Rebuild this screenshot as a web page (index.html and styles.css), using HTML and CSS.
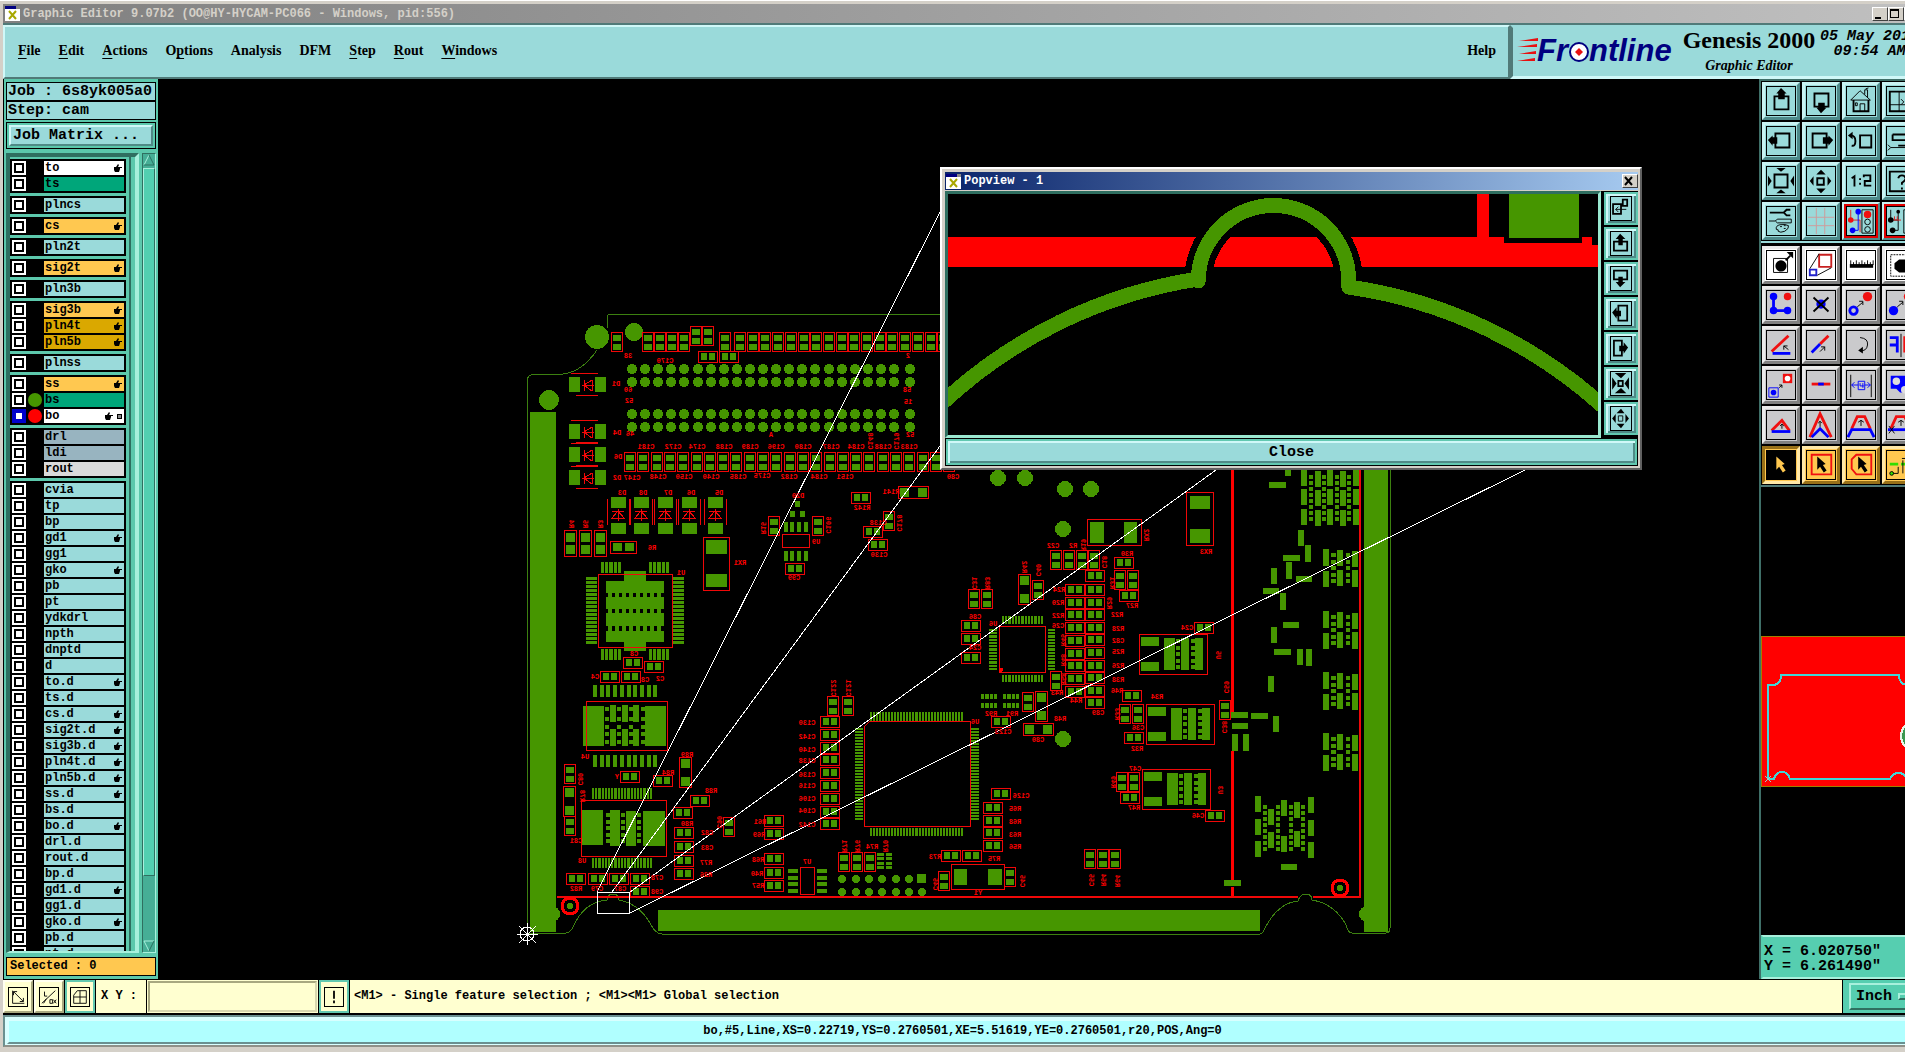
FILE: index.html
```html
<!DOCTYPE html>
<html lang="en">
<head>
    <meta charset="UTF-8">
    <title>Graphic Editor 9.07b2</title>
    <meta name="viewport" content="width=device-width, initial-scale=1">
    <link rel="stylesheet" href="styles.css">
</head>
<body>
<div class="window">
    <div class="titlebar">
        <svg class="xicon" viewBox="0 0 15 15"><rect width="15" height="15" fill="#fff"/><rect width="11" height="3" fill="#000080"/><rect x="11" width="4" height="3" fill="#888"/><path d="M4 5l7 8M11 5l-7 8" stroke="#a8a800" stroke-width="2"/></svg>
        <span class="title-text">Graphic Editor 9.07b2 (OO@HY-HYCAM-PC066 - Windows, pid:556)</span>
        <button class="winbtn" aria-label="Minimize"><svg viewBox="0 0 12 12"><path d="M2 9h6v2H2z"/></svg></button>
        <button class="winbtn" aria-label="Maximize"><svg viewBox="0 0 12 12"><path d="M1 1h9v9H1zM2 3v6h7V3z" fill-rule="evenodd"/></svg></button>
        <button class="winbtn" aria-label="Close window"><svg viewBox="0 0 12 12"><path d="M2 2l7 7M9 2l-7 7" stroke="#000" stroke-width="2"/></svg></button>
    </div>

    <header>
        <nav>
            <a href="#"><u>F</u>ile</a>
            <a href="#"><u>E</u>dit</a>
            <a href="#"><u>A</u>ctions</a>
            <a href="#">O<u>p</u>tions</a>
            <a href="#">Analysis</a>
            <a href="#">DFM</a>
            <a href="#"><u>S</u>tep</a>
            <a href="#"><u>R</u>out</a>
            <a href="#"><u>W</u>indows</a>
            <a href="#" class="help">Help</a>
        </nav>
        <div class="brand">
            <svg class="logo" viewBox="0 0 162 32">
                <path d="M3 6l19-3v3H3zM1 12l20-3v3H1zM3 19l17-3v3H3zM1 26l18-3v3H1z" fill="#e81010"/>
                <text x="21" y="26" class="logo-text">Fr</text>
                <circle cx="63" cy="17" r="9" fill="#fff" stroke="#000080" stroke-width="2"/>
                <path d="M63 13l4 4-4 4-4-4z" fill="#e81010"/>
                <text x="73" y="26" class="logo-text">ntline</text>
            </svg>
            <div class="product">
                <div class="product-name">Genesis 2000</div>
                <div class="product-sub">Graphic Editor</div>
            </div>
            <div class="clock">05 May 2015<br>09:54 AM</div>
        </div>
    </header>

    <main>
        <aside class="side">
            <div class="info">Job : 6s8yk005a0</div>
            <div class="info">Step: cam</div>
            <div class="matrix"><button>Job Matrix ...</button></div>
            <div class="list-area">
                <div class="list-frame"><div id="layers"></div></div>
                <div class="scroll">
                    <svg viewBox="0 0 12 12"><path d="M6 1l5 10H1z" fill="#46ae96"/><path d="M1 11L6 1" stroke="#a8f0dc" fill="none"/><path d="M6 1l5 10H1" stroke="#2a7060" fill="none"/></svg>
                    <div class="thumb"></div>
                    <svg viewBox="0 0 12 12"><path d="M1 1h10L6 11z" fill="#46ae96"/><path d="M6 11L1 1h10" stroke="#a8f0dc" fill="none"/><path d="M11 1L6 11" stroke="#2a7060" fill="none"/></svg>
                </div>
            </div>
            <div class="selected">Selected : 0</div>
        </aside>

        <section class="canvas">
            <svg id="board" width="1602" height="900" viewBox="158 79 1602 900"></svg>
            <div class="popview">
                <div class="pop-title">
                    <svg class="xicon" viewBox="0 0 15 15"><rect width="15" height="15" fill="#fff"/><rect width="11" height="3" fill="#000080"/><rect x="11" width="4" height="3" fill="#888"/><path d="M4 5l7 8M11 5l-7 8" stroke="#a8a800" stroke-width="2"/></svg>
                    <span class="title-text">Popview - 1</span>
                    <button class="winbtn" aria-label="Close popview"><svg viewBox="0 0 12 12"><path d="M2 2l7 8M9 2l-7 8" stroke="#000" stroke-width="2"/></svg></button>
                </div>
                <div class="pop-body">
                    <div class="pop-view">
                        <svg viewBox="948 194 652 241" preserveAspectRatio="none" shape-rendering="crispEdges">
                            <g fill="#f00">
                                <rect x="948" y="237" width="652" height="30"/>
                                <rect x="1479" y="194" width="12" height="44"/>
                            </g>
                            <path d="M1506 237h78v6h-78zM1594 237h6v8h-6z" fill="#000"/>
                            <rect x="1511" y="194" width="70" height="44" fill="#469600"/>
                            <path d="M1199 281a75 75 0 0 1 151 0" fill="none" stroke="#000" stroke-width="28"/>
                            <path d="M940 405A485 485 0 0 1 1199 279V281A75 75 0 0 1 1350 281V287A485 485 0 0 1 1608 409" fill="none" stroke="#469600" stroke-width="15" stroke-linejoin="round"/>
                        </svg>
                    </div>
                    <div class="pop-tools">
                        <button aria-label="Copy view"><svg viewBox="0 0 22 26"><path d="M2 8h9v11H2zM13 3h5v7h-5z" fill="none" stroke="#000" stroke-width="2"/><path d="M5 14h12M8 11l-3 3 3 3" fill="none" stroke="#000"/></svg></button>
                        <button aria-label="Pan up"><svg viewBox="0 0 22 26"><path d="M3 11h15v10H3z" fill="none" stroke="#000" stroke-width="2"/><path d="M10 2l6 6h-3v7H8V8H5z"/></svg></button>
                        <button aria-label="Pan down"><svg viewBox="0 0 22 26"><path d="M3 4h15v10H3z" fill="none" stroke="#000" stroke-width="2"/><path d="M10 23l6-6h-3v-6H8v6H5z"/></svg></button>
                        <button aria-label="Pan left"><svg viewBox="0 0 22 26"><path d="M8 4h10v17H8z" fill="none" stroke="#000" stroke-width="2"/><path d="M1 12l5-6v4h5v6H6v3z"/></svg></button>
                        <button aria-label="Pan right"><svg viewBox="0 0 22 26"><path d="M3 4h9v17H3z" fill="none" stroke="#000" stroke-width="2"/><path d="M19 12l-5-6v4H9v6h5v3z"/></svg></button>
                        <button aria-label="Zoom in"><svg viewBox="0 0 22 26"><path d="M8 10h5v6H8z" fill="none" stroke="#000" stroke-width="2"/><path d="M4 1h13l-6 6zM4 24h13l-6-6zM1 6v14l5-7zM20 6v14l-5-7z"/></svg></button>
                        <button aria-label="Zoom out"><svg viewBox="0 0 22 26"><path d="M8 10h5v6H8z" fill="none" stroke="#000"/><path d="M6 7h9l-4-5zM6 19h9l-4 5zM5 8v10l-4-5zM16 8v10l4-5z"/></svg></button>
                    </div>
                </div>
                <div class="pop-foot"><button>Close</button></div>
            </div>
        </section>

        <aside class="tools">
            <div class="toolgrid">
                <button aria-label="Pan up"><svg viewBox="0 0 30 30"><path d="M8 10h15v14H8z" class="k2"/><path d="M15 1l6 6h-2v6h-7V7h-2z"/></svg></button>
                <button aria-label="Pan down"><svg viewBox="0 0 30 30"><path d="M8 7h15v14H8z" class="k2"/><path d="M15 28l6-6h-2v-5h-7v5h-2z"/></svg></button>
                <button aria-label="Home"><svg viewBox="0 0 30 30"><path d="M4 14L14 4l11 10zM14 26v-8h5v8M9 17h2v3H9zM19 8V3h3v8M20 2l3-1" class="k1"/><path d="M7 14v12h16V14" class="k2"/></svg></button>
                <button aria-label="Window"><svg viewBox="0 0 30 30"><path d="M3 5h24v21H3z" class="k2"/><path d="M13 5v21M3 19h24M15 13l3 3-3 3" class="k1"/></svg></button>

                <button aria-label="Pan left"><svg viewBox="0 0 30 30"><path d="M9 7h15v15H9z" class="k2"/><path d="M1 14l5-5v2h5v7H6v2z"/></svg></button>
                <button aria-label="Pan right"><svg viewBox="0 0 30 30"><path d="M6 7h15v15H6z" class="k2"/><path d="M28 14l-5-5v2h-6v7h6v2z"/></svg></button>
                <button aria-label="Previous view"><svg viewBox="0 0 30 30"><path d="M14 9h12v13H14z" class="k2"/><path d="M4 9q5 0 5 6t-4 5" class="k2"/><path d="M1 9l5-4v8z"/></svg></button>
                <button aria-label="Zoom panel"><svg viewBox="0 0 30 30"><path d="M6 8h24M6 8v6h24M12 20h16" class="k2"/><path d="M1 19l3 3-3 3M4 22h24" class="k1"/></svg></button>

                <button aria-label="Zoom in"><svg viewBox="0 0 30 30"><path d="M8 8h14v14H8z" class="k2"/><path d="M10 1h10l-5 4zM10 28h10l-5-4zM1 9v12l4-6zM29 9v12l-4-6z"/></svg></button>
                <button aria-label="Zoom out"><svg viewBox="0 0 30 30"><path d="M11 12h7v7h-7z" class="k2"/><path d="M10 8h10l-5-5zM10 23h10l-5 5zM7 10v10l-4-5zM22 10v10l4-5z"/></svg></button>
                <button aria-label="Scale 1:2"><svg viewBox="0 0 30 30"><path d="M5 12l3-2v11M14 12v2M14 17v2M18 11V9h7v6h-6v5h7" class="k2"/></svg></button>
                <button aria-label="Help"><svg viewBox="0 0 30 30"><path d="M3 5h24v21H3z" class="k2"/><path d="M12 12q1-3 4-3t4 3q0 2-4 5v2M16 22v2" class="k2"/></svg></button>

                <button aria-label="Preferences"><svg viewBox="0 0 30 30"><path d="M3 6h16M25 3h-4l-3 3 3 3h4" class="k2"/><path d="M2 15h7l2-2h15v4H11l-2-2" class="k1"/><path d="M10 24q-1-4 4-5 6-1 9 1 1 3-4 6-5 2-7 0 1-2-2-2zM14 21h2M18 20h2M18 23h2" class="k1"/></svg></button>
                <button aria-label="Grid"><svg viewBox="0 0 30 30"><path d="M10 1v28M19 1v28M1 11h28M1 20h28" fill="none" stroke="#d09a9a"/></svg></button>
                <button class="hot" aria-label="Net stop"><svg viewBox="0 0 30 30"><path d="M4 3v11h10v13" class="r1"/><path d="M12 5v20H6" class="b1"/><circle cx="4" cy="14" r="3" class="rf"/><circle cx="12" cy="5" r="3" class="bf"/><circle cx="6" cy="25" r="3" class="bf"/><path d="M16 3h12v25H16z" class="k1"/><circle cx="22" cy="8" r="4" class="rf"/><circle cx="22" cy="16" r="3" class="k1"/><circle cx="22" cy="24" r="3" class="k1"/></svg></button>
                <button class="hot" aria-label="Net compare"><svg viewBox="0 0 30 30"><path d="M12 5v20H6M4 3v11h8" class="k1"/><path d="M7 14h8M8 10v4M11 10v4" class="r1"/><circle cx="12" cy="5" r="2"/><circle cx="4" cy="14" r="3"/><circle cx="6" cy="25" r="3"/><path d="M18 3h12v25H18z" class="k1"/></svg></button>
            </div>
            <div class="toolgrid gray">
                <button class="white" aria-label="Pad info"><svg viewBox="0 0 30 30"><path d="M7 8h15v15H7z" class="k1"/><circle cx="15" cy="16" r="6"/><path d="M20 10l5-5" class="k2"/><path d="M21 1h7v7z"/></svg></button>
                <button class="white" aria-label="Zoom feature"><svg viewBox="0 0 30 30"><path d="M13 4h13v13H13z" fill="none" stroke="#c82020" stroke-width="2"/><path d="M3 20h7v6H3z" fill="none" stroke="#22c" stroke-width="2"/><path d="M3 19L13 3M11 26l15-8" class="k1"/></svg></button>
                <button class="white" aria-label="Measure"><svg viewBox="0 0 30 30"><path d="M3 14h25v4H3z"/><path d="M4 10v5M7 12v3M10 10v5M13 12v3M16 10v5M19 12v3M22 10v5M25 12v3M28 10v5" class="k1"/></svg></button>
                <button class="white" aria-label="Highlight"><svg viewBox="0 0 30 30"><path d="M4 4h25v23H4z" class="k1" stroke-dasharray="2 1"/><path d="M13 9h17v14H13l-5-4v-6z"/></svg></button>

                <button aria-label="Copy chain"><svg viewBox="0 0 30 30"><path d="M7 6v15h15" fill="none" stroke="#00f" stroke-width="3"/><circle cx="7" cy="6" r="4" class="bf"/><circle cx="7" cy="21" r="4" class="bf"/><circle cx="22" cy="21" r="4" class="bf"/><circle cx="22" cy="6" r="4" class="rf"/></svg></button>
                <button aria-label="Delete"><svg viewBox="0 0 30 30"><circle cx="15" cy="14" r="5" class="bf"/><path d="M7 7l16 15M23 7L7 22" class="k2"/></svg></button>
                <button aria-label="Move"><svg viewBox="0 0 30 30"><circle cx="7" cy="21" r="4" class="b2"/><circle cx="22" cy="6" r="5" class="rf"/><path d="M11 17l6-5M13 11h4v4" class="k1"/></svg></button>
                <button aria-label="Copy"><svg viewBox="0 0 30 30"><circle cx="7" cy="21" r="5" class="bf"/><circle cx="23" cy="6" r="5" class="rf"/><path d="M11 17l6-5M13 11h4v4" class="k1"/></svg></button>

                <button aria-label="Rotate line"><svg viewBox="0 0 30 30"><path d="M5 22L23 5" class="r2"/><path d="M6 24h19" class="b2"/><path d="M23 20l-5-4M18 20v-4h4" class="k1"/></svg></button>
                <button aria-label="Stretch line"><svg viewBox="0 0 30 30"><path d="M14 14l9-9" class="r2"/><path d="M5 23l9-9" class="b2"/><path d="M14 22l5-5M15 17h4v4" class="k1"/></svg></button>
                <button aria-label="Rotate"><svg viewBox="0 0 30 30"><path d="M14 7q9 1 8 8-1 7-8 6" class="k1"/><path d="M12 21l5-4v7z"/></svg></button>
                <button aria-label="Mirror"><svg viewBox="0 0 30 30"><path d="M3 7h8v16M3 15h8" class="b2"/><path d="M15 3v25" class="k1"/><path d="M27 7h-8v16" class="r2"/></svg></button>

                <button aria-label="Transform"><svg viewBox="0 0 30 30"><path d="M2 18h10v10H2z" class="b1"/><circle cx="7" cy="23" r="3" class="bf"/><path d="M17 3h10v10H17z" class="rf"/><circle cx="22" cy="8" r="3" fill="#fff"/><path d="M13 18l3-3M13 15h3v3" class="k1"/></svg></button>
                <button aria-label="Break line"><svg viewBox="0 0 30 30"><path d="M5 14h20" class="r2"/><path d="M12 14h6" class="b2"/></svg></button>
                <button aria-label="Spacing"><svg viewBox="0 0 30 30"><path d="M4 4v24M26 4v24" class="k1"/><path d="M12 11h7v9h-7zM12 15H5M8 12l-3 3 3 3M19 15h6M22 12l3 3-3 3M14 13v3h4M17 13v5" class="b1"/></svg></button>
                <button aria-label="Merge"><svg viewBox="0 0 30 30"><path d="M4 5h26v18H14l-4-4H4z" class="bf"/><circle cx="10" cy="11" r="4" fill="#ddd"/><circle cx="19" cy="20" r="4" fill="#ddd"/></svg></button>

                <button aria-label="Angle small"><svg viewBox="0 0 30 30"><path d="M5 21L16 10l8 11" class="r2"/><path d="M5 22h20" class="b2"/><path d="M16 19v-5M14 16l2-2 2 2" class="k1"/></svg></button>
                <button aria-label="Angle large"><svg viewBox="0 0 30 30"><path d="M3 28L14 3l12 25" class="r2"/><path d="M5 28l9-9 9 9" class="b2"/><path d="M14 17v-6M12 13l2-2 2 2" class="k1"/></svg></button>
                <button aria-label="Bridge"><svg viewBox="0 0 30 30"><path d="M5 19l6-13h8l6 13" class="r2"/><path d="M1 28l4-8h20l4 8" class="b2"/><path d="M15 16v-6M12 12l3-2 3 2" class="k1"/></svg></button>
                <button aria-label="Bridge delete"><svg viewBox="0 0 30 30"><path d="M4 19l6-13h9l6 13" class="r2"/><path d="M1 20h28" class="b2"/><path d="M15 16v-6M12 12l3-2 3 2M2 16l6 8M8 16l-6 8" class="k1"/></svg></button>

                <button class="orange down" aria-label="Select"><svg viewBox="0 0 30 30"><path d="M10 6l9 8-3 1 4 6-3 2-4-6-3 3z" fill="#ffc850"/></svg></button>
                <button class="orange" aria-label="Select box"><svg viewBox="0 0 30 30"><path d="M5 4h21v21H5z" fill="none" stroke="#f01010" stroke-width="2"/><path d="M11 6l9 8-3 1 4 6-3 2-4-6-3 3z"/></svg></button>
                <button class="orange" aria-label="Select polygon"><svg viewBox="0 0 30 30"><path d="M10 4h16v21H10l-5-6V9z" fill="none" stroke="#f01010" stroke-width="2"/><path d="M12 6l9 8-3 1 4 6-3 2-4-6-3 3z"/></svg></button>
                <button class="orange" aria-label="Select net"><svg viewBox="0 0 30 30"><path d="M3 14h9M15 14h12" stroke="#3d0" stroke-width="3"/><path d="M6 24h6V17M17 10v14M16 8h10" class="k1"/><circle cx="5" cy="24" r="2" fill="#3d0" stroke="#000"/></svg></button>
            </div>
            <div class="overview">
                <svg viewBox="1762 636 161 151" shape-rendering="crispEdges">
                    <rect x="1762" y="636" width="161" height="151" fill="#a08000"/>
                    <rect x="1763" y="637" width="160" height="149" fill="#f00"/>
                    <path d="M1769 779v-94h6q7-1 7-10h118q0 9 8 10h6v94h-6q-2-6-9-6-5 0-8 6h-100q-2-7-8-7t-8 7z" fill="none" stroke="#40d8d8" stroke-width="2"/>
                    <path d="M1766 776l6 6M1772 776l-6 6" stroke="#9cc"/>
                    <circle cx="1918" cy="736" r="17" fill="#e8f4e8"/>
                    <circle cx="1918" cy="736" r="15" fill="#3c9850"/>
                </svg>
            </div>
            <div class="coords">X = 6.020750"<br>Y = 6.261490"</div>
        </aside>
    </main>

    <div class="entrybar">
        <button class="entry-btn" aria-label="Snap"><svg viewBox="0 0 20 20"><path d="M4 3v14h13M5 4l11 11M5 8V4h4M16 11v4h-4" class="k1"/></svg></button>
        <button class="entry-btn" aria-label="Measure units"><svg viewBox="0 0 20 20"><path d="M2 17L17 3M5 4v5h3M7 12l-3 5M11 13h3v4h-3zM15 13l3 4M18 13l-3 4" class="k1"/></svg></button>
        <button class="entry-btn green" aria-label="Grid snap"><svg viewBox="0 0 20 20"><path d="M7 3h10v14H3V8zM10 3v14M3 10h14" class="k1"/></svg></button>
        <label for="xy">X Y :</label>
        <input type="text" id="xy">
        <button class="entry-btn green" aria-label="Alert"><svg viewBox="0 0 20 20"><path d="M10 3v9M10 14v3" class="k2"/></svg></button>
        <div class="message">&lt;M1&gt; - Single feature selection ; &lt;M1&gt;&lt;M1&gt; Global selection</div>
        <div class="units">
            <select aria-label="Units">
                <option>Inch</option>
                <option>mm</option>
            </select>
            <span class="knob"></span>
        </div>
    </div>
    <div class="status"><div>bo,#5,Line,XS=0.22719,YS=0.2760501,XE=5.51619,YE=0.2760501,r20,POS,Ang=0</div></div>
</div>
<script src="app.js"></script>
</body>
</html>
```

FILE: styles.css
```css
* { box-sizing: border-box; }
body {
    margin: 0;
    height: 100vh;
    overflow: hidden;
    background: #d4d0c8;
    color: #000;
    font-family: "Liberation Mono", monospace;
    font-size: 12px;
    font-weight: bold;
}
button, input, select { font: inherit; color: inherit; border-radius: 0; }
button { padding: 0; cursor: pointer; }
svg { display: block; }

/* the editor window runs a little past the right edge of the screen */
.window {
    width: calc(100% + 20px);
    height: 100vh;
    display: flex;
    flex-direction: column;
    padding: 3px 3px 5px 3px;
    background: #d4d0c8;
    border-top: 1px solid #fff;
}
.titlebar {
    display: flex;
    align-items: center;
    height: 19px;
    padding: 0 2px;
    background: linear-gradient(90deg, #808080, #c0c0c0);
    color: #d4d0c8;
}
.xicon { width: 15px; height: 15px; margin-right: 3px; }
.title-text { flex: 1; line-height: 18px; }
.winbtn {
    width: 16px;
    height: 14px;
    background: #d4d0c8;
    border: 1px solid;
    border-color: #fff #404040 #404040 #fff;
}
.winbtn svg { width: 12px; height: 12px; }

/* menu + brand */
header {
    display: flex;
    height: 56px;
    background: #9adada;
    border-top: 2px solid #507a78;
    font-family: "Liberation Serif", serif;
}
nav {
    flex: 1;
    display: flex;
    align-items: center;
    gap: 18px;
    padding: 0 12px 2px 13px;
    border: 2px solid;
    border-color: #d0f8f8 #507a78 #507a78 #d0f8f8;
    font-size: 14px;
}
nav a { color: #000; text-decoration: none; }
nav u { text-underline-offset: 3px; }
nav .help { margin-left: auto; }
.brand {
    width: 412px;
    display: flex;
    border: 3px solid;
    border-color: #9adada #d0f8f8 #d0f8f8 #507a78;
    padding-left: 3px;
}
.logo { width: 162px; height: 32px; margin-top: 7px; flex: none; overflow: visible; }
.logo-text {
    font: italic bold 31px "Liberation Sans", sans-serif;
    fill: #000080;
}
.product { width: 138px; margin-left: 2px; text-align: center; flex: none; }
.product-name { font-size: 24px; line-height: 28px; margin-top: -2px; }
.product-sub { font-size: 14px; font-style: italic; line-height: 24px; }
.clock {
    font: italic bold 15px/15px "Liberation Mono", monospace;
    text-align: center;
    white-space: nowrap;
    padding: 1px 2px;
}

main { flex: 1; display: flex; min-height: 0; background: #000; }

/* left column */
.side {
    width: 155px;
    display: flex;
    flex-direction: column;
    padding: 3px 2px;
    background: #5cc8ac;
    border-left: 1px solid #000;
}
.info {
    height: 19px;
    padding-left: 1px;
    border: 1px solid #000;
    background: #9adada;
    font-size: 15px;
    line-height: 17px;
    white-space: nowrap;
}
.matrix {
    margin: 2px 0 4px;
    height: 27px;
    padding: 2px;
    border: 1px solid #000;
}
.matrix button {
    width: 100%;
    height: 100%;
    border: 2px solid;
    border-color: #d0f8f8 #4f8a86 #4f8a86 #d0f8f8;
    background: #9adada;
    font-size: 15px;
    line-height: 18px;
    text-align: left;
    padding-left: 2px;
}
.list-area { flex: 1; display: flex; min-height: 0; gap: 3px; }
.list-frame {
    flex: 1;
    overflow: hidden;
    border: 4px solid;
    border-color: #2f6f60 #a8f0dc #a8f0dc #2f6f60;
    padding-right: 4px;
    border-bottom-width: 2px;
}
#layers {
    padding: 2px 3px 0 0;
    display: flex;
    flex-direction: column;
    gap: 3px;
    border-right: 2px solid #2f6f60;
}
.group {
    display: flex;
    flex-direction: column;
    gap: 2px;
    padding: 2px;
    background: #000;
}
.layer { display: flex; height: 14px; }
.layer input {
    appearance: none;
    width: 14px;
    height: 14px;
    margin: 0;
    background: #fff;
    border: 2px solid #fff;
    outline: 2px solid #000;
    outline-offset: -4px;
}
.layer input:checked { border-color: #00c; outline-color: #00c; outline-offset: -4px; }
.dot { width: 14px; height: 14px; margin: 0 2px; border-radius: 50%; }
.dot.green { background: #469600; }
.dot.red { background: #f00; }
.lname {
    flex: 1;
    display: flex;
    align-items: center;
    padding: 0 2px 0 1px;
    line-height: 13px;
    background: #9adada;
}
.lname.white { background: #fff; }
.lname.mask { background: #00a67a; }
.lname.signal { background: #ffc850; }
.lname.power { background: #daa800; }
.lname.drill { background: #98b4c0; }
.lname.rout { background: #dadada; }
.hand { width: 8px; height: 8px; margin-left: auto; }
.mark { width: 5px; height: 5px; margin-left: 4px; border: 1px solid #000; background: #888; }
.scroll {
    width: 14px;
    display: flex;
    flex-direction: column;
    background: #46ae96;
    border: 1px solid;
    border-color: #2f6f60 #a8f0dc #a8f0dc #2f6f60;
}
.scroll svg { width: 12px; height: 12px; }
.thumb {
    flex: 1;
    margin: 2px 0 64px;
    background: #52cfb0;
    border: 1px solid;
    border-color: #a8f0dc #2f6f60 #2f6f60 #a8f0dc;
}
.selected {
    margin-top: 4px;
    height: 19px;
    padding-left: 3px;
    border: 1px solid #000;
    background: #ffc850;
    line-height: 17px;
}

/* drawing area */
.canvas { flex: 1; position: relative; overflow: hidden; }
.label { font: bold 7px "Liberation Mono", monospace; fill: #f00; text-anchor: middle; }

.popview {
    position: absolute;
    left: 782px;
    top: 88px;
    width: 702px;
    display: flex;
    flex-direction: column;
    padding: 3px 2px 2px 3px;
    background: #d4d0c8;
    border: 2px solid;
    border-color: #fff #606060 #606060 #fff;
}
.pop-title {
    display: flex;
    align-items: center;
    height: 18px;
    padding-left: 1px;
    background: linear-gradient(90deg, #0a246a, #a6caf0);
    color: #fff;
}
.pop-body { display: flex; height: 247px; margin-top: 1px; background: #000; }
.pop-view {
    flex: 1;
    border: 3px solid;
    border-color: #2f6f60 #9ae8d0 #9ae8d0 #2f6f60;
}
.pop-view svg { width: 100%; height: 100%; }
.pop-tools { display: flex; flex-direction: column; gap: 2px; padding: 1px 0 0 3px; }
.pop-tools button {
    width: 34px;
    height: 33px;
    padding: 0 3px;
    border: 2px solid #62c8b0;
    background: #9adada;
    box-shadow: inset 2px 2px #d0f8f8, inset -2px -2px #4f8a86;
}
.pop-tools svg { width: 22px; height: 25px; margin: 0 auto; border: 1px solid #000; }
.pop-foot { padding: 1px; background: #000; }
.pop-foot button {
    width: 100%;
    height: 26px;
    border: 2px solid #62c8b0;
    background: #9adada;
    box-shadow: inset 2px 2px #d0f8f8, inset -2px -2px #4f8a86;
    font-size: 15px;
}

/* right column */
.tools {
    width: 163px;
    display: flex;
    flex-direction: column;
    border-left: 2px solid #3f6f68;
    border-top: 2px solid #3f6f68;
}
.toolgrid {
    display: grid;
    grid-template-columns: repeat(4, 38px);
    gap: 2px;
    padding: 1px;
    border-bottom: 2px solid #9adada;
}
.toolgrid.gray { padding-top: 3px; border-bottom-color: #507a78; }
.toolgrid button {
    width: 38px;
    height: 38px;
    padding: 1px;
    background: #9adada;
    border: 3px solid;
    border-color: #c8f2f2 #4f8a8a #4f8a8a #c8f2f2;
}
.toolgrid svg { width: 30px; height: 30px; border: 1px solid #000; }
.gray button { background: #cacacc; border-color: #eaeaea #808080 #808080 #eaeaea; }
.gray .white svg { background: #fff; }
.gray .white { background: #fff; }
.gray .orange { background: #ffc850; border-color: #ffe8a8 #987018 #987018 #ffe8a8; }
.gray .orange.down { border-color: #987018 #ffe8a8 #ffe8a8 #987018; }
.orange.down svg { background: #000; }
.toolgrid .hot svg { outline: 2px solid #e00000; }
.k1 { fill: none; stroke: #000; stroke-width: 1; }
.k2 { fill: none; stroke: #000; stroke-width: 2; }
.r1 { fill: none; stroke: #e02020; stroke-width: 1; }
.r2 { fill: none; stroke: #f01010; stroke-width: 3; }
.b1 { fill: none; stroke: #00f; stroke-width: 1; }
.b2 { fill: none; stroke: #00f; stroke-width: 3; }
.rf { fill: #f01010; }
.bf { fill: #00f; }
.overview { flex: 1; display: flex; align-items: center; }
.overview svg { width: 161px; height: 151px; }
.coords {
    height: 44px;
    padding: 7px 1px;
    background: #56ceb0;
    border: 2px solid;
    border-color: #a8f0dc #2f6f60 #a8f0dc #56ceb0;
    font-size: 15px;
    line-height: 15px;
}

/* entry line */
.entrybar {
    display: flex;
    height: 36px;
    padding: 1px 0 2px;
    gap: 1px;
    background: #000;
}
.entry-btn {
    width: 30px;
    padding: 3px;
    background: #ffffd0;
    border: 2px solid;
    border-color: #fffff0 #a8a880 #a8a880 #fffff0;
}
.entry-btn svg { width: 20px; height: 20px; margin: 0 auto; border: 1px solid #000; background: #ffffd0; }
.entry-btn.green { border-color: #62c8b0; }
.entrybar label { width: 50px; background: #ffffd0; line-height: 32px; padding-left: 5px; }
.entrybar input {
    width: 171px;
    border: 3px solid;
    border-color: #a8a880 #d8d8b0 #d8d8b0 #a8a880;
    outline: 1px solid #ffffd0;
    outline-offset: -1px;
    background: #ffffd0;
}
.message { flex: 1; background: #ffffd0; line-height: 33px; padding-left: 4px; white-space: nowrap; }
.units {
    width: 79px;
    display: flex;
    align-items: center;
    position: relative;
    padding: 3px 6px;
    background: #56ceb0;
}
.units select {
    appearance: none;
    width: 100%;
    height: 27px;
    padding: 0 5px;
    border: 2px solid;
    border-color: #a8f0dc #2f6f60 #2f6f60 #a8f0dc;
    background: #56ceb0;
    font-size: 15px;
}
.knob {
    position: absolute;
    right: 12px;
    top: 13px;
    width: 12px;
    height: 7px;
    border: 2px solid;
    border-color: #a8f0dc #2f6f60 #2f6f60 #a8f0dc;
}

.status {
    height: 32px;
    padding: 2px;
    background: #d8ffff;
    border: 2px solid #6a9090;
    border-bottom-color: #909088;
}
.status div {
    height: 25px;
    background: #b0ffff;
    border: 2px solid;
    border-color: #d8ffff #6a9090 #6a9090 #d8ffff;
    text-align: center;
    line-height: 20px;
}
```

FILE: app.js
```js
// ---- layer list ----
// name, class, hand marker
const groups = [
    [['to', 'white', 1], ['ts', 'mask']],
    [['plncs', '']],
    [['cs', 'signal', 1]],
    [['pln2t', '']],
    [['sig2t', 'signal', 1]],
    [['pln3b', '']],
    [['sig3b', 'signal', 1], ['pln4t', 'power', 1], ['pln5b', 'power', 1]],
    [['plnss', '']],
    [['ss', 'signal', 1], ['bs', 'mask', 0, 'green'], ['bo', 'white', 1, 'red']],
    [['drl', 'drill'], ['ldi', 'drill'], ['rout', 'rout']],
    ['cvia', 'tp', 'bp', 'gd1*', 'gg1', 'gko*', 'pb', 'pt', 'ydkdrl', 'npth', 'dnptd', 'd',
     'to.d*', 'ts.d', 'cs.d*', 'sig2t.d*', 'sig3b.d*', 'pln4t.d*', 'pln5b.d*', 'ss.d*', 'bs.d',
     'bo.d*', 'drl.d', 'rout.d', 'bp.d', 'gd1.d*', 'gg1.d', 'gko.d*', 'pb.d', 'pt.d']
        .map(n => [n.replace('*', ''), '', n.endsWith('*')])
];
const hand = '<svg class="hand" viewBox="0 0 8 8"><path d="M0 3h2l2-3 1 1-1 2h4v1H6v1L5 8H1L0 6z"/></svg>';

document.getElementById('layers').innerHTML = groups.map(g =>
    '<div class="group">' + g.map(([name, cls, h, dot]) => `<label class="layer">
        <input type="checkbox"${name === 'bo' ? ' checked' : ''}>
        <span class="dot ${dot || ''}"></span>
        <span class="lname ${cls}">${name}${h ? hand : ''}${name === 'bo' ? '<i class="mark"></i>' : ''}</span>
    </label>`).join('') + '</div>').join('');

// ---- board ----
const G = '#469600', R = '#f00808';
let red = '', green = '', labels = '';

function pad(x, y, w, h) { green += `M${x} ${y}h${w}v${h}h${-w}z`; }
function hole(x, y, r) { green += `M${x - r} ${y}a${r} ${r} 0 1 1 ${2 * r} 0a${r} ${r} 0 1 1 ${-2 * r} 0z`; }
function box(x, y, w, h) { red += `M${x} ${y}h${w}v${h}h${-w}z`; }
function line(x1, y1, x2, y2) { red += `M${x1} ${y1}L${x2} ${y2}`; }
// two pad parts, standing and lying
function capV(x, y) { box(x - 6, y - 10, 11, 19); pad(x - 4, y - 7, 8, 6); pad(x - 4, y + 2, 8, 6); }
function capH(x, y) { box(x - 10, y - 6, 19, 11); pad(x - 7, y - 4, 6, 7); pad(x + 1, y - 4, 6, 7); }
function bigV(x, y) { box(x - 6, y - 15, 12, 30); pad(x - 4, y - 13, 9, 9); pad(x - 4, y + 5, 9, 9); }
function bigH(x, y) { box(x - 15, y - 6, 30, 12); pad(x - 13, y - 4, 9, 9); pad(x + 5, y - 4, 9, 9); }
function row(n, x, y, dx, dy, fn) { for (let i = 0; i < n; i++) fn(Math.round(x + i * dx), Math.round(y + i * dy)); }
function combX(x1, x2, y, h, n) { const p = (x2 - x1) / n; for (let i = 0; i < n; i++) pad(x1 + i * p, y, p - 1, h); }
function combY(y1, y2, x, w, n) { const p = (y2 - y1) / n; for (let i = 0; i < n; i++) pad(x, y1 + i * p, w, p - 1); }
// bottom side silk is read from behind
function label(x, y, s, rot) {
    labels += `<text class="label" transform="translate(${x} ${y}) rotate(${rot || 0}) scale(-1 1)" y="2">${s}</text>`;
}

// top connector rows
[[617, 342], [648, 342], [660, 342], [672, 342], [684, 342], [696, 336], [708, 336], [725, 342]].forEach(p => capV(...p));
row(17, 740, 342, 12.7, 0, capV);
capH(708, 357); capH(729, 357);
[369, 382, 414, 427].forEach(y => { row(21, 632, y, 13.1, 0, (x, y) => hole(x, y, 5)); hole(910, y, 5); });
row(25, 630, 462, 13.3, 0, capV);
hole(597, 337, 12); hole(634, 332, 9); hole(549, 400, 10);

// diodes
[385, 432, 455, 478].forEach(y => {
    pad(569, y - 8, 11, 15); pad(595, y - 8, 11, 15);
    line(571, y - 12, 598, y - 12); line(576, y + 10, 598, y + 10);
    line(582, y, 594, y); line(584, y - 5, 584, y + 6);
    red += `M592 ${y - 5}v11M592 ${y - 5}L584 ${y}L592 ${y + 6}`;
});
[618, 641, 665, 689, 715].forEach(x => {
    pad(x - 7, 497, 15, 11); pad(x - 7, 523, 15, 11);
    line(x - 11, 499, x - 11, 525); line(x + 11, 499, x + 11, 525);
    line(x, 509, x, 521); line(x - 6, 511, x + 6, 511);
    red += `M${x} 511L${x - 6} 518h12z`;
});
[570, 585, 600].forEach(x => { box(x - 6, 530, 12, 26); pad(x - 4, 533, 9, 9); pad(x - 4, 545, 9, 9); });
box(610, 541, 26, 12); pad(613, 543, 9, 8); pad(625, 543, 9, 8);
box(703, 537, 26, 53); pad(706, 540, 21, 14); pad(706, 574, 21, 13);

// U1
box(598, 574, 74, 73);
combY(577, 645, 586, 11, 17); combY(577, 645, 673, 11, 17);
combX(601, 622, 562, 11, 5); combX(649, 670, 562, 11, 5);
combX(601, 622, 649, 11, 5); combX(649, 670, 649, 11, 5);
pad(624, 571, 22, 10); pad(606, 581, 58, 12); pad(606, 597, 58, 12); pad(606, 613, 58, 13); pad(606, 631, 58, 11); pad(624, 642, 22, 9);
[593, 609, 626].forEach(y => row(8, 608, y, 7, 0, (x, y) => pad(x, y, 4, 5)));

// U9 and parts round it
capV(774, 526); capV(818, 526); capH(861, 498); bigH(913, 492); capV(889, 521); capH(873, 532); capH(878, 545); capH(795, 569);
box(782, 534, 27, 13);
[786, 792, 799, 806].forEach(x => { pad(x - 2, 522, 4, 10); pad(x - 2, 551, 4, 10); });
pad(795, 501, 5, 6); pad(790, 511, 5, 6); pad(800, 511, 5, 6);

// U4 and U8
capH(633, 663); capH(654, 667); capH(610, 677); capH(631, 677);
row(10, 593, 685, 6.7, 0, (x, y) => { pad(x, y, 4, 12); pad(x, y + 70, 4, 12); });
box(586, 701, 81, 49);
pad(583, 706, 21, 40); pad(645, 706, 21, 40);
[610, 622, 633].forEach(x => { pad(x, 705, 6, 17); pad(x, 729, 6, 17); });
[605, 617, 629, 641].forEach(x => [707, 717, 725, 732, 740].forEach(y => pad(x, y, 4, 4)));
capV(570, 774); bigV(569, 801); capV(570, 826); capH(630, 777); capH(663, 781); bigV(685, 772);
combX(592, 653, 788, 11, 19); combX(592, 653, 858, 10, 19);
box(581, 800, 85, 56);
pad(581, 810, 22, 35); pad(643, 811, 22, 35); pad(610, 810, 10, 36); pad(626, 811, 10, 35);
[606, 621, 637].forEach(x => row(5, x, 813, 0, 6.5, (x, y) => pad(x, y, 4, 4)));
[[700, 801], [683, 813], [684, 833], [684, 847], [684, 861], [684, 874], [576, 879], [598, 879], [619, 879], [640, 879], [640, 892],
 [774, 821], [774, 834], [774, 859], [774, 873], [774, 886]].forEach(p => capH(...p));
capV(729, 827);

// large QFP
capV(833, 706); capV(848, 706);
row(9, 830, 722, 0, 12.8, capH);
red += 'M870 721H970V826H864V727z';
combX(870, 964, 712, 9, 31); combX(870, 964, 828, 8, 31);
combY(728, 821, 855, 8, 31); combY(728, 821, 971, 8, 31);
box(800, 867, 14, 27);
[869, 876, 882, 889].forEach(y => { pad(788, y, 10, 4); pad(817, y, 10, 4); });
capV(844, 862); capV(857, 862); capV(870, 862);
[853, 857, 862, 866].forEach(y => { pad(877, y, 7, 3); pad(886, y, 6, 3); });
[842, 856, 869, 882, 896, 909].forEach(x => { hole(x, 879, 4); hole(x, 892, 4); });
pad(917, 874, 9, 9); hole(922, 892, 4);
capH(951, 856); capH(972, 856); capV(944, 881); capV(1010, 877);
box(951, 864, 53, 25); pad(954, 869, 13, 16); pad(988, 869, 14, 16);
capH(1001, 794); row(4, 993, 808, 0, 12.7, capH);
capV(1090, 859); capV(1103, 859); capV(1115, 859);

// centre
hole(998, 478, 8); hole(1025, 478, 8); hole(1065, 489, 8); hole(1091, 489, 8); hole(1063, 529, 8); hole(1063, 739, 8);
box(1087, 519, 54, 26); pad(1090, 522, 14, 21); pad(1124, 522, 13, 21);
box(1186, 492, 27, 53); pad(1190, 496, 20, 13); pad(1190, 529, 20, 14);
[1056, 1069, 1082, 1094].forEach(x => capV(x, 560));
capH(1095, 576);
row(9, 1075, 590, 0, 12.7, capH); row(10, 1095, 590, 0, 12.6, capH);
capH(1124, 563); capV(1120, 580); capV(1133, 580); capH(1129, 596);
bigV(1024, 589); capV(1038, 590); capV(974, 599); capV(987, 599);
capH(971, 626); capH(971, 639); capH(971, 658);
box(999, 626, 46, 46);
combX(1002, 1044, 616, 8, 13); combX(1002, 1044, 675, 7, 13);
combY(629, 671, 989, 8, 13); combY(629, 671, 1048, 7, 13);
capV(1056, 681); capV(1028, 702); bigV(1041, 706); capH(1001, 722); bigH(1038, 729);
combX(981, 998, 694, 5, 4); combX(981, 998, 703, 5, 4); combX(1003, 1020, 694, 5, 4); combX(1003, 1020, 703, 5, 4);

// three regulators
[[0, 0], [7, 70], [3, 135]].forEach(([dx, dy]) => {
    box(1139 + dx, 634 + dy, 68, 40);
    pad(1141 + dx, 637 + dy, 18, 9); pad(1141 + dx, 662 + dy, 18, 9);
    pad(1164 + dx, 638 + dy, 11, 32); pad(1181 + dx, 638 + dy, 8, 32); pad(1195 + dx, 638 + dy, 8, 32);
    row(5, 1176 + dx, 639 + dy, 0, 6.5, (x, y) => { pad(x, y, 4, 4); pad(x + 15, y, 4, 4); });
});
capH(1204, 628); capH(1132, 696); capV(1125, 714); capV(1138, 714); capH(1134, 738); capV(1225, 710);
capV(1122, 782); capV(1134, 782); capH(1130, 798); capH(1215, 816);

// right sector
[[1269,482,17,6],[1285,470,6,6],[1298,530,6,16],[1305,545,6,17],[1283,555,17,6],[1286,562,6,17],[1271,568,6,16],[1296,576,16,6],
 [1263,588,16,6],[1280,593,6,17],[1283,622,16,6],[1271,627,6,16],[1274,649,17,6],[1297,649,6,16],[1306,649,6,17],[1268,676,6,16],
 [1231,712,17,6],[1251,713,17,6],[1273,716,6,16],[1232,723,16,6],[1232,734,6,17],[1243,734,6,17],[1224,880,17,6],[1281,864,16,6]
].forEach(p => pad(...p));
[1301, 1315, 1327, 1340, 1353].forEach((x, i) => [471, 490, 510].forEach(y => pad(x, y - (i % 2 ? 0 : 1), 6, 16)));
[1309, 1322, 1335, 1347].forEach(x => row(8, x, 475, 0, 6, (x, y) => pad(x, y, 4, 4)));
[549, 611, 672, 733].forEach(y => {
    pad(1323, y, 6, 17); pad(1323, y + 22, 6, 16);
    pad(1337, y + 1, 6, 16); pad(1337, y + 21, 6, 16);
    pad(1352, y + 2, 6, 16); pad(1352, y + 21, 6, 17);
    row(5, 1331, y + 4, 0, 6.5, (x, y) => { pad(x, y, 5, 4); pad(x + 15, y, 4, 4); });
});
[796, 819, 841].forEach(y => { pad(1255, y, 6, 16); pad(1308, y + 1, 6, 16); });
[[1268, 809], [1268, 832], [1281, 800], [1281, 836], [1294, 802], [1294, 831]].forEach(([x, y]) => pad(x, y, 6, 16));
[1263, 1276, 1289, 1301].forEach(x => row(8, x, 805, 0, 6, (x, y) => pad(x, y, 4, 4)));

// board edges
pad(530, 412, 26, 520); pad(1364, 380, 24, 552); pad(658, 910, 602, 21);
hole(552, 914, 8); hole(1367, 914, 8); hole(570, 906, 3); hole(1340, 888, 3);

// reference designators
[[628,356,'38'],[665,361,'C170'],[908,356,'2'],[628,390,'60'],[907,390,'58'],[629,401,'52'],[908,402,'15'],[630,434,'46'],[910,435,'52'],[771,435,'A'],
 [616,384,'D1'],[617,433,'D4'],[618,457,'D6'],[617,478,'D2'],[646,447,'C181'],[673,447,'C172'],[697,447,'C174'],[724,447,'C188'],[750,447,'C189'],[776,447,'C196'],[803,447,'C180'],[831,447,'C187'],[856,447,'C184'],[883,447,'C188'],[909,447,'C183'],
 [632,478,'C147'],[658,477,'C148'],[684,477,'C150'],[711,477,'C140'],[738,477,'C185'],[762,476,'C175'],[789,477,'C182'],[819,477,'C184'],[845,477,'C151'],[953,477,'C80'],
 [622,493,'D3'],[643,493,'D8'],[668,493,'D7'],[691,493,'D6'],[719,493,'D5'],[652,548,'R6'],[740,563,'RX1'],[681,573,'U1'],[798,496,'D20'],[891,492,'R141'],[862,508,'R142'],[878,523,'C138'],[879,555,'C130'],[816,542,'U9'],[794,578,'C99'],
 [634,654,'C8'],[595,677,'C4'],[645,680,'C8'],[660,679,'C2'],[585,757,'U4'],[617,777,'Y'],[668,773,'R84'],[687,755,'R89'],[711,791,'R88'],[687,824,'R80'],[707,833,'C82'],[707,848,'C83'],[706,863,'R77'],[706,875,'R26'],
 [576,841,'C81'],[582,861,'U8'],[576,889,'R82'],[597,889,'C79'],[620,889,'C87'],[657,878,'C78'],[657,892,'C98'],[760,822,'R61'],[759,835,'R69'],[758,860,'R68'],[757,874,'R40'],[758,886,'R57'],
 [807,723,'C130'],[807,737,'C142'],[807,750,'C140'],[807,761,'C138'],[807,775,'C136'],[807,786,'C116'],[807,799,'C106'],[807,811,'C104'],[807,825,'C142'],[807,862,'U7'],[872,847,'R74'],[935,857,'R73'],
 [1053,546,'C22'],[1073,546,'R2'],[1206,552,'RX3'],[1127,554,'R30'],[1132,606,'R27'],[1117,615,'R22'],[1118,629,'R28'],[1118,641,'C82'],[1118,652,'R25'],[1118,666,'R26'],[1118,680,'R38'],[1117,691,'R46'],
 [1059,590,'R24'],[1058,603,'R20'],[1058,616,'R22'],[1058,626,'C26'],[975,617,'C86'],[975,648,'C24'],[993,624,'U6'],[1187,628,'C24'],[1157,697,'R34'],[1057,693,'R43'],[1076,701,'R44'],[1098,713,'C89'],[991,714,'R92'],[1012,714,'R91'],[1060,719,'R48'],[1003,732,'C123'],[1038,740,'C80'],[1137,749,'R32'],[1138,728,'C36'],
 [975,722,'U6'],[1021,796,'C126'],[1015,809,'R65'],[1015,822,'R68'],[1015,835,'R63'],[1015,847,'R56'],[994,859,'R75'],[978,893,'Y1'],[1135,769,'C47'],[1134,808,'R47'],[1198,816,'C46']
].forEach(l => label(...l));
[[571,524,'R4'],[585,524,'R5'],[600,524,'R3'],[763,528,'R15'],[828,525,'C106'],[899,523,'C178'],[870,441,'C148'],[896,441,'C179'],[580,779,'C80'],[582,796,'R78'],[719,822,'C90'],[833,688,'C122'],[848,688,'C121'],[844,846,'R71'],[857,846,'R76'],[885,846,'R70'],[935,884,'C45'],[1022,881,'C45'],
 [1146,535,'RX2'],[1083,545,'R19'],[1104,562,'C18'],[1112,583,'R31'],[1109,603,'R29'],[1024,567,'R42'],[1038,570,'C40'],[974,583,'C31'],[987,583,'R83'],[1218,655,'U5'],[1226,687,'C59'],[1224,727,'C38'],[1117,714,'R33'],[1113,782,'R49'],[1220,790,'U3'],[1063,640,'R45'],[1063,660,'R48'],[1063,679,'R58'],[1091,880,'C55'],[1103,880,'R54'],[1117,881,'R64']
].forEach(l => label(...l, 90));

document.getElementById('board').innerHTML = `
<g shape-rendering="crispEdges">
    <path d="${green}" fill="${G}"/>
    <path d="M1000 314H610Q607 314 607 319V328M597 350Q582 372 563 374H535Q527 374 527 382V933H566Q570 933 573 927Q584 902 607 900Q607 894 613 894T619 900Q640 904 651 925Q656 934 662 934H1260Q1263 934 1265 928Q1278 903 1298 901Q1300 894 1306 894T1312 900Q1335 904 1346 925Q1348 933 1352 933H1386Q1390 933 1390 928V400" fill="none" stroke="#3c8010"/>
    <path d="${red}" fill="none" stroke="${R}"/>
    <path d="M557 897H1298M1313 897H1361M1360 460V898" fill="none" stroke="${R}" stroke-width="2"/>
    <path d="M1232 460V712M1232 751V880M1232 887V897" stroke="#f00" stroke-width="3"/>
    <circle cx="570" cy="906" r="8" fill="none" stroke="#f00" stroke-width="3"/>
    <circle cx="1340" cy="888" r="8" fill="none" stroke="#f00" stroke-width="3"/>
    <circle cx="1001" cy="670" r="2" fill="#f00"/>
    <g fill="none" stroke="#fff">
        <path d="M940 212L597 892M940 446L612 892M1216 470L630 892M1525 470L630 913M597 892h32v21h-32z"/>
        <path d="M517 934h21M527 923v22M519 926l17 17M536 926l-17 17"/>
        <circle cx="527" cy="934" r="7"/>
    </g>
</g>
${labels}`;
```
